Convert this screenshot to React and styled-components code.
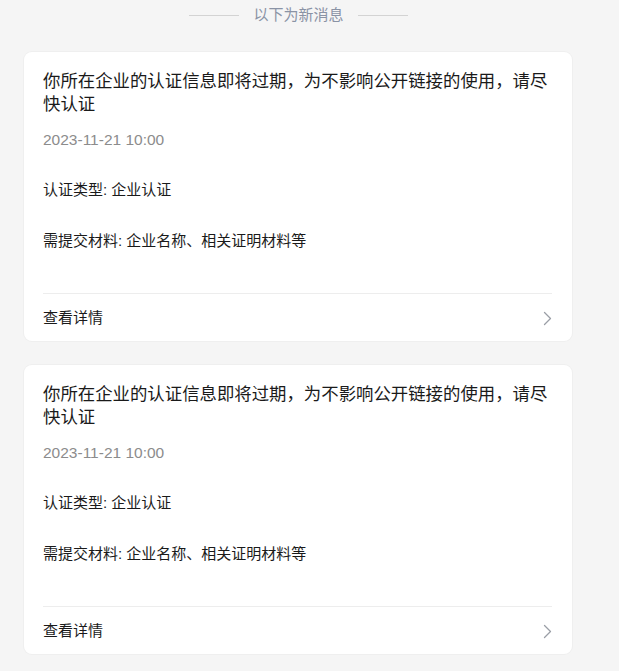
import React from 'react';
import styled, { createGlobalStyle } from 'styled-components';

const GlobalStyle = createGlobalStyle`
  body {
    margin: 0;
    background: #f5f5f5;
    font-family: "Liberation Sans", "Noto Sans CJK SC", sans-serif;
  }
`;

const messages = [
	{
		id: 1,
		title: '你所在企业的认证信息即将过期，为不影响公开链接的使用，请尽快认证',
		time: '2023-11-21 10:00',
		type: '企业认证',
		materials: '企业名称、相关证明材料等',
	},
	{
		id: 2,
		title: '你所在企业的认证信息即将过期，为不影响公开链接的使用，请尽快认证',
		time: '2023-11-21 10:00',
		type: '企业认证',
		materials: '企业名称、相关证明材料等',
	},
];

const Chevron = () => (
	<svg width="9" height="15" viewBox="0 0 9 15" fill="none">
		<path d="M1.5 1.5 L7.5 7.5 L1.5 13.5" stroke="#9a9ea6" strokeWidth="1.3" strokeLinecap="round" strokeLinejoin="round" />
	</svg>
);

const App = () => {
	return (
		<Page>
			<GlobalStyle />
			<Divider>
				<Line />
				<span>以下为新消息</span>
				<Line />
			</Divider>
			<List>
				{messages.map(m => (
					<Card key={m.id}>
						<Title>{m.title}</Title>
						<Time>{m.time}</Time>
						<Field gap={30}>认证类型: {m.type}</Field>
						<Field gap={31}>需提交材料: {m.materials}</Field>
						<Footer>
							<span>查看详情</span>
							<Chevron />
						</Footer>
					</Card>
				))}
			</List>
		</Page>
	);
};

const Page = styled.div`
	padding: 5px 0 20px 24px;
	width: 548px;
`;

const Divider = styled.div`
	display: flex;
	align-items: center;
	justify-content: center;
	gap: 14px;
	height: 20px;
	padding-left: 1px;

	span {
		font-size: 15px;
		line-height: 20px;
		color: #8a93a5;
	}
`;

const Line = styled.div`
	width: 50px;
	height: 1px;
	background: #d3d3d3;
`;

const List = styled.div`
	display: flex;
	flex-direction: column;
	gap: 24px;
	margin-top: 27px;
`;

const Card = styled.div`
	background: #fff;
	border-radius: 8px;
	box-shadow: 0 0 0 1px #efefef;
	padding: 16px 20px 0 19px;
`;

const Title = styled.div`
	font-family: "Noto Sans CJK SC", sans-serif;
	font-size: 17.4px;
	line-height: 23px;
	margin-right: -2px;
	color: #1a1a1a;
`;

const Time = styled.div`
	margin-top: 16px;
	font-size: 15.5px;
	line-height: 20px;
	color: #8c8c8c;
`;

const Field = styled.div`
	margin-top: ${p => p.gap}px;
	font-size: 15px;
	line-height: 20px;
	color: #1a1a1a;
`;

const Footer = styled.div`
	margin-top: 42px;
	border-top: 1px solid #ededed;
	display: flex;
	align-items: center;
	justify-content: space-between;
	padding: 14px 0 13px;
	font-size: 15px;
	line-height: 20px;
	color: #1a1a1a;
`;

export default App;
